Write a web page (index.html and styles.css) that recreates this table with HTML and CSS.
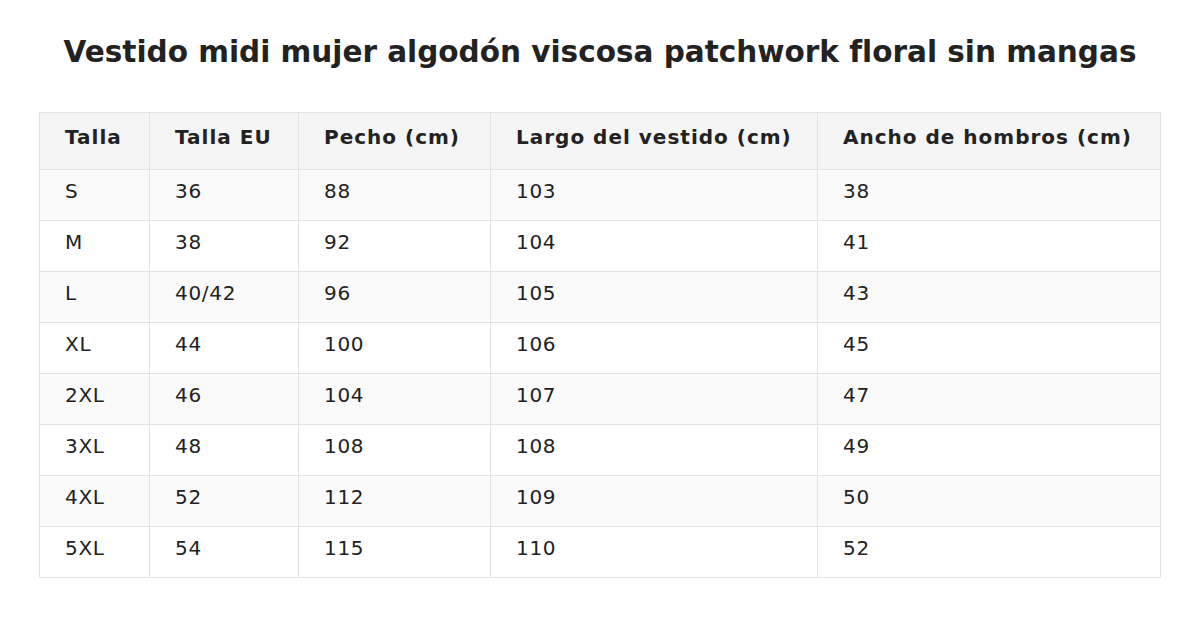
FILE: index.html
```html
<!DOCTYPE html>
<html lang="es">
<head>
<meta charset="utf-8">
<title>Tabla de tallas</title>
<link rel="stylesheet" href="styles.css">
</head>
<body>
<div class="page">
  <h1 class="title">Vestido midi mujer algodón viscosa patchwork floral sin mangas</h1>
  <table class="sizes">
    <colgroup>
      <col class="c1"><col class="c2"><col class="c3"><col class="c4"><col class="c5">
    </colgroup>
    <thead>
      <tr><th>Talla</th><th>Talla EU</th><th>Pecho (cm)</th><th>Largo del vestido (cm)</th><th>Ancho de hombros (cm)</th></tr>
    </thead>
    <tbody>
      <tr><td>S</td><td>36</td><td>88</td><td>103</td><td>38</td></tr>
      <tr><td>M</td><td>38</td><td>92</td><td>104</td><td>41</td></tr>
      <tr><td>L</td><td>40/42</td><td>96</td><td>105</td><td>43</td></tr>
      <tr><td>XL</td><td>44</td><td>100</td><td>106</td><td>45</td></tr>
      <tr><td>2XL</td><td>46</td><td>104</td><td>107</td><td>47</td></tr>
      <tr><td>3XL</td><td>48</td><td>108</td><td>108</td><td>49</td></tr>
      <tr><td>4XL</td><td>52</td><td>112</td><td>109</td><td>50</td></tr>
      <tr><td>5XL</td><td>54</td><td>115</td><td>110</td><td>52</td></tr>
    </tbody>
  </table>
</div>
</body>
</html>
```
FILE: styles.css
```css
html, body {
  margin: 0;
  padding: 0;
  background: #ffffff;
}
.page {
  padding: 0 39px;
  font-family: "DejaVu Sans", Verdana, sans-serif;
  color: #222222;
}
.title {
  margin: 0;
  padding: 33px 0 40px;
  text-align: center;
  font-size: 29.5px;
  font-weight: bold;
  line-height: 39px;
  color: #222222;
  white-space: nowrap;
}
.sizes {
  width: 100%;
  border-collapse: collapse;
  table-layout: fixed;
  font-size: 20px;
}
.c1 { width: 110px; }
.c2 { width: 149px; }
.c3 { width: 192px; }
.c4 { width: 327px; }
.c5 { width: auto; }
.sizes th, .sizes td {
  border: 1px solid #e2e2e2;
  text-align: left;
  padding: 10px 25px 18px;
  line-height: 22px;
  letter-spacing: 0.7px;
  white-space: nowrap;
}
.sizes th {
  background: #f5f5f5;
  font-weight: bold;
  letter-spacing: 1px;
  padding: 13px 25px 21px;
}
.sizes tbody tr:nth-child(odd) td {
  background: #fafafa;
}
```
